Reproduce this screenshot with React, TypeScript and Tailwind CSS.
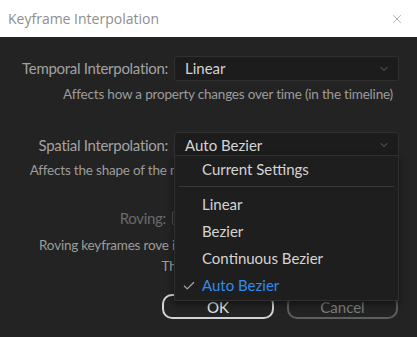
import { Check, ChevronDown, X } from "lucide-react";

const menuItems = ["Linear", "Bezier", "Continuous Bezier", "Auto Bezier"];

function Select({ value }: { value: string }) {
  return (
    <div className="flex h-[25px] flex-1 items-center justify-between rounded-[3px] border border-[#303030] bg-[#1c1c1c] pl-[10px] pr-[8px] text-[15px] text-[#d4d4d4]">
      <span>{value}</span>
      <ChevronDown size={12} strokeWidth={1.1} className="text-[#a8a8a8]" />
    </div>
  );
}

export default function App() {
  return (
    <div className="flex h-[337px] w-[417px] flex-col overflow-hidden bg-[#232323] font-['Lato',sans-serif]">
      {/* title bar */}
      <div className="flex h-[37px] shrink-0 items-center justify-between bg-white pl-[8px] pr-[13px]">
        <span className="font-['Open_Sans',sans-serif] text-[14px] text-[#8e8e8e]">Keyframe Interpolation</span>
        <X size={14} strokeWidth={1} className="text-[#7a7a7a]" />
      </div>

      <div className="relative flex flex-col pr-[18px] pt-[19px]">
        <div className="flex items-center gap-[6px]">
          <span className="w-[168px] text-right text-[15px] tracking-[-0.3px] text-[#a2a2a2]">Temporal Interpolation:</span>
          <Select value="Linear" />
        </div>
        <p className="mt-[3px] pr-[6px] text-right text-[13.5px] tracking-[-0.2px] text-[#9c9c9c]">
          Affects how a property changes over time (in the timeline)
        </p>

        <div className="mt-[28px] flex items-center gap-[6px]">
          <span className="w-[168px] text-right text-[15px] tracking-[-0.3px] text-[#a2a2a2]">Spatial Interpolation:</span>
          <Select value="Auto Bezier" />
        </div>
        <p className="mt-[3px] pr-[6px] text-right text-[13.5px] tracking-[-0.2px] text-[#9c9c9c]">
          Affects the shape of the motion path (in the Composition panel)
        </p>

        <div className="mt-[26px] flex items-center gap-[6px]">
          <span className="w-[166px] text-right text-[15px] tracking-[-0.3px] text-[#6a6a6a]">Roving:</span>
          <div className="h-[14px] w-[14px] rounded-[2px] border border-[#555]" />
        </div>
        <p className="mt-[6px] pr-[6px] text-right text-[13.5px] leading-[21px] tracking-[-0.2px] text-[#9c9c9c]">
          Roving keyframes rove in time to create smooth speed curves.
          <br />
          The first and last keyframes cannot rove.
        </p>

        <div className="mt-[17px] flex gap-[13px] pl-[162px]">
          <button className="h-[25px] w-[112px] rounded-[10px] border-2 border-[#d2d2d2] text-[15px] text-[#e8e8e8]">OK</button>
          <button className="h-[25px] w-[111px] rounded-[10px] border-2 border-[#5e5e5e] text-[15px] text-[#7c7c7c]">Cancel</button>
        </div>

        {/* open dropdown menu */}
        <div className="absolute left-[174px] top-[118px] w-[225px] border border-[#303030] bg-[#1e1e1e] py-[1px] shadow-[0_3px_6px_rgba(0,0,0,0.5)]">
          <div className="flex h-[25px] items-center pl-[27px] text-[15px] text-[#d4d4d4]">Current Settings</div>
          <div className="mx-[4px] my-[4px] h-px bg-[#3a3a3a]" />
          {menuItems.map((item) => {
            const active = item === "Auto Bezier";
            return (
              <div key={item} className="flex h-[27px] items-center text-[15px]">
                <span className="flex w-[27px] justify-center">
                  {active && <Check size={14} strokeWidth={2} className="text-[#a8a8a8]" />}
                </span>
                <span className={active ? "text-[#2f8ceb]" : "text-[#d4d4d4]"}>{item}</span>
              </div>
            );
          })}
        </div>
      </div>
    </div>
  );
}
